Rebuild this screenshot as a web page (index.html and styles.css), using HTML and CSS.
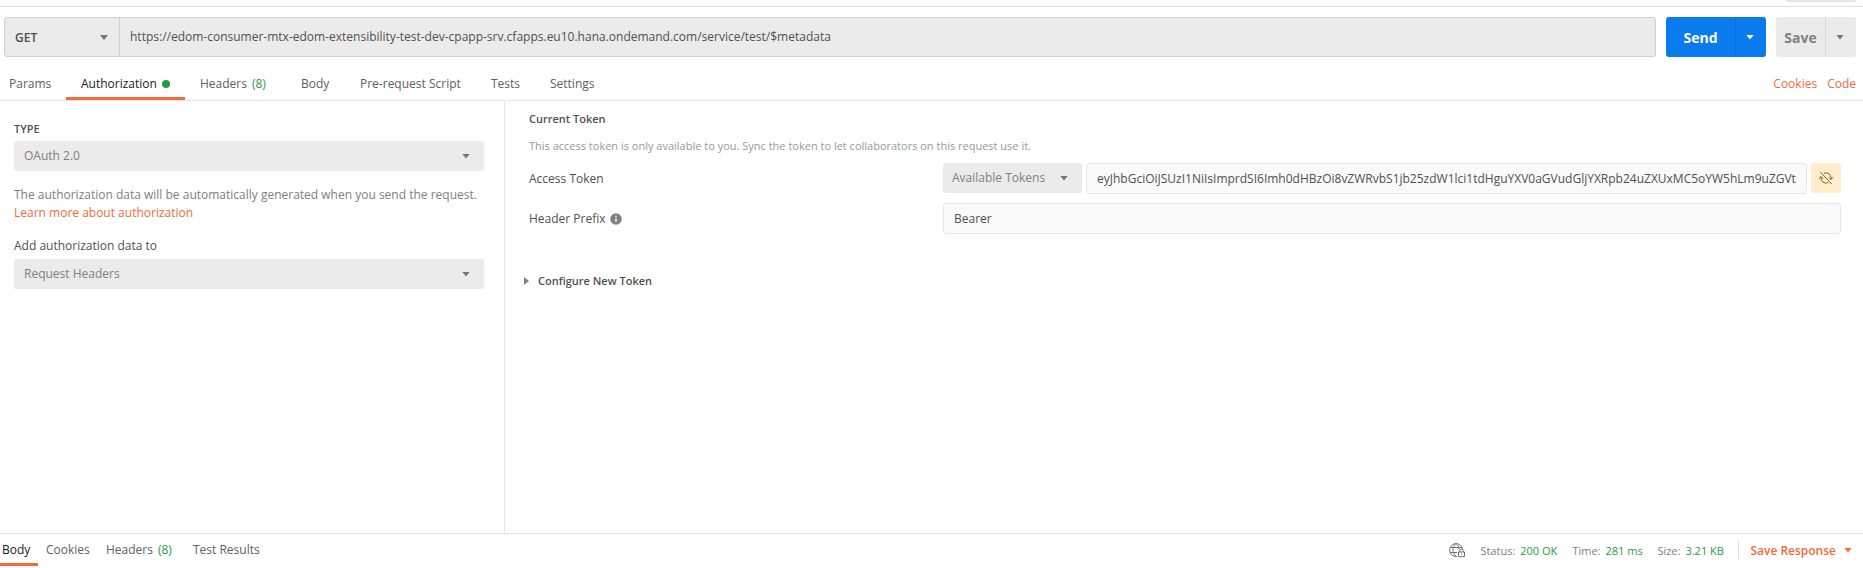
FILE: index.html
```html
<!DOCTYPE html>
<html lang="en">
<head>
<meta charset="utf-8">
<title>Request</title>
<link rel="stylesheet" href="styles.css">
</head>
<body>
<div class="app">
  <div class="topstrip"><span class="stub"></span></div>
  <div class="urlbar">
    <div class="address">
      <div class="method"><b>GET</b><i class="caret"></i></div>
      <div class="url"><span>https://edom-consumer-mtx-edom-extensibility-test-dev-cpapp-srv.cfapps.eu10.hana.ondemand.com/service/test/$metadata</span></div>
    </div>
    <div class="split send"><b>Send</b><span class="drop"><i class="caret"></i></span></div>
    <div class="split save"><b>Save</b><span class="drop"><i class="caret"></i></span></div>
  </div>
  <nav class="tabs">
    <span class="tab params">Params</span>
    <span class="tab auth active">Authorization<i class="dot"></i></span>
    <span class="tab headers">Headers<em>(8)</em></span>
    <span class="tab body">Body</span>
    <span class="tab script">Pre-request Script</span>
    <span class="tab tests">Tests</span>
    <span class="tab">Settings</span>
    <span class="links"><a>Cookies</a><a>Code</a></span>
  </nav>
  <main class="panes">
    <section class="left">
      <h2 class="type">TYPE</h2>
      <div class="select"><span>OAuth 2.0</span><i class="caret"></i></div>
      <p class="note"><span class="desc">The authorization data will be automatically generated when you send the request.</span><br><a class="learn">Learn more about authorization</a></p>
      <p class="label">Add authorization data to</p>
      <div class="select"><span>Request Headers</span><i class="caret"></i></div>
    </section>
    <section class="right">
      <h2 class="current">Current Token</h2>
      <p class="hint">This access token is only available to you. Sync the token to let collaborators on this request use it.</p>
      <div class="field">
        <span class="name">Access Token</span>
        <div class="select available"><span>Available Tokens</span><i class="caret"></i></div>
        <div class="input token"><span>eyJhbGciOiJSUzI1NiIsImprdSI6Imh0dHBzOi8vZWRvbS1jb25zdW1lci1tdHguYXV0aGVudGljYXRpb24uZXUxMC5oYW5hLm9uZGVt</span></div>
        <div class="sync"><svg width="16" height="14" viewBox="0 0 16 14"><path d="M6 2.300A5 5 0 0 1 13 7v1.500M10 11.700A5 5 0 0 1 3 7V5.500M.8 7.700L3 5.500l2.200 2.200M10.800 6.300L13 8.500l2.200-2.200M2.500 1l11 12"/></svg></div>
      </div>
      <div class="field second">
        <span class="name">Header Prefix<svg class="info" width="12" height="12" viewBox="0 0 12 12"><circle cx="6" cy="6" r="5.800"/><path d="M6 2.800v1.400M6 5.200v3.800"/></svg></span>
        <div class="input"><span>Bearer</span></div>
      </div>
      <div class="configure"><i></i><b>Configure New Token</b></div>
    </section>
  </main>
  <footer class="response">
    <span class="rtab rbody active">Body</span>
    <span class="rtab rcookies">Cookies</span>
    <span class="rtab rheaders">Headers<em>(8)</em></span>
    <span class="rtab">Test Results</span>
    <div class="meta">
      <svg class="globe" width="17" height="15" viewBox="0 0 17 15"><path d="M8 13.500A6.500 6.500 0 1 1 13.500 6M7 .5c-4 4-4 9 0 13M7 .5c2 1.700 3 3.500 3 6M1.300 4.500h11.500M1.300 9.500h6.700M9.500 9h6v4.700h-6zM10.800 9V7.800a1.700 1.700 0 0 1 3.400 0V9M12.500 10.800v1"/></svg>
      <span class="status">Status:<em>200 OK</em></span>
      <span class="time">Time:<em>281 ms</em></span>
      <span class="size">Size:<em>3.21 KB</em></span>
      <span class="saveresp"><b>Save Response</b><i class="caret"></i></span>
    </div>
  </footer>
</div>
</body>
</html>
```
FILE: styles.css
```css
* { box-sizing: border-box; }
body { margin: 0; background: #fff; color: #505050; font: 12px/18px "Open Sans", sans-serif; }
h2, p { margin: 0; }
em, i { font-style: normal; }
b, h2 { font-weight: 600; }
.app { width: 1863px; height: 568px; display: flex; flex-direction: column; overflow: hidden; white-space: nowrap; }
.caret { flex: none; width: 8px; height: 5px; background: #757575; clip-path: polygon(0 0, 100% 0, 50% 100%); }
em { color: #249c47; margin-left: 5px; }
.topstrip { height: 7px; border-bottom: 1px solid #e1e1e1; display: flex; justify-content: flex-end; padding-right: 7px; }
.stub { width: 70px; height: 2px; background: #e6e6e6; border-radius: 0 0 3px 3px; }
.urlbar { display: flex; height: 40px; margin: 10px 7px 0 4px; }
.address { display: flex; width: 1652px; margin-right: 10px; background: #ebebeb; border: 1px solid #d0d0d0; border-radius: 3px; }
.method { width: 115px; border-right: 1px solid #d0d0d0; display: flex; justify-content: space-between; align-items: center; padding: 1px 11px 0 10px; }
.url { padding: 10px 0 0 10px; color: #505050; }
.split { display: flex; width: 100px; border-radius: 3px; font-size: 14px; margin-right: 10px; }
.split b { width: 69px; text-align: center; padding-top: 12px; font-weight: 700; }
.drop { flex: 1; display: flex; align-items: center; justify-content: center; border-left: 1px solid #0a6fdb; padding-right: 2px; }
.send { background: #097bed; color: #fff; }
.send .caret { background: #fff; }
.save { width: 80px; margin-right: 0; background: #ebebeb; color: #808080; }
.save b { width: 49px; }
.save .drop { border-color: #d8d8d8; }
.tabs { display: flex; height: 44px; border-bottom: 1px solid #e5e5e5; padding: 18px 7px 0 9px; color: #606060; }
.tab { flex: none; }
.params { width: 57px; }
.auth { width: 119px; height: 25px; padding-left: 15px; margin-right: 15px; border-bottom: 3px solid #f26b3a; }
.active { color: #202020; }
.dot { display: inline-block; width: 8px; height: 8px; margin-left: 5px; border-radius: 50%; background: #249c47; }
.headers { width: 101px; }
.body { width: 59px; }
.script { width: 131px; }
.tests { width: 59px; }
.links { display: flex; gap: 10px; margin-left: auto; }
a, .saveresp { color: #f26b3a; }
.panes { display: flex; height: 432px; }
.left { width: 505px; padding: 19px 20px 0 14px; border-right: 1px solid #e5e5e5; }
h2, .configure { font-size: 11px; }
.select { height: 30px; display: flex; align-items: center; justify-content: space-between; padding: 0 14px 0 10px; background: #ebebeb; border-radius: 3px; color: #808080; }
.type { margin-bottom: 3px; }
.note { color: #808080; margin: 15px 0 15px; }
.label { margin-bottom: 4px; }
.right { width: 1358px; padding: 9px 22px 0 24px; }
.hint { margin: 9px 0 8px; font-size: 11px; color: #999; }
.field { display: flex; height: 31px; }
.name { width: 414px; padding-top: 7px; display: flex; }
.input { flex: 1; border: 1px solid #e6e6e6; border-radius: 3px; background: #fafafa; padding: 6px 10px; }
.available { width: 139px; margin-right: 4px; padding: 0 14px 0 9px; }
.sync { width: 30px; height: 30px; margin-left: 4px; border-radius: 3px; background: #ffedcc; display: flex; justify-content: center; align-items: center; }
.sync path { fill: none; stroke: #806020; }
.second { margin-top: 9px; }
.info { margin: 3px 0 0 4px; fill: #808080; }
.info path { stroke: #fff; stroke-width: 1.3; }
.configure { display: flex; align-items: center; margin: 38px 0 0 -5px; }
.configure i { width: 5px; height: 8px; margin-right: 9px; background: #808080; clip-path: polygon(0 0, 100% 50%, 0 100%); }
.response { display: flex; height: 35px; border-top: 1px solid #e1e1e1; color: #606060; }
.rtab { flex: none; padding-top: 7px; }
.rbody { width: 38px; height: 32px; padding-left: 2px; margin-right: 8px; border-bottom: 3px solid #f26b3a; }
.rcookies { width: 60px; }
.rheaders { width: 87px; }
.meta { display: flex; margin-left: auto; padding-right: 11px; font-size: 11px; color: #808080; line-height: 33px; }
.globe { margin: 9px 14px 0 0; fill: none; stroke: #707070; }
.meta > span { flex: none; }
.status { width: 92px; }
.time { width: 85px; }
.size { width: 81px; }
.saveresp { display: flex; align-items: center; gap: 8px; height: 20px; margin-top: 6px; padding-left: 11px; border-left: 1px solid #e1e1e1; font-size: 12px; }
.saveresp .caret { background: #f26b3a; }
```
